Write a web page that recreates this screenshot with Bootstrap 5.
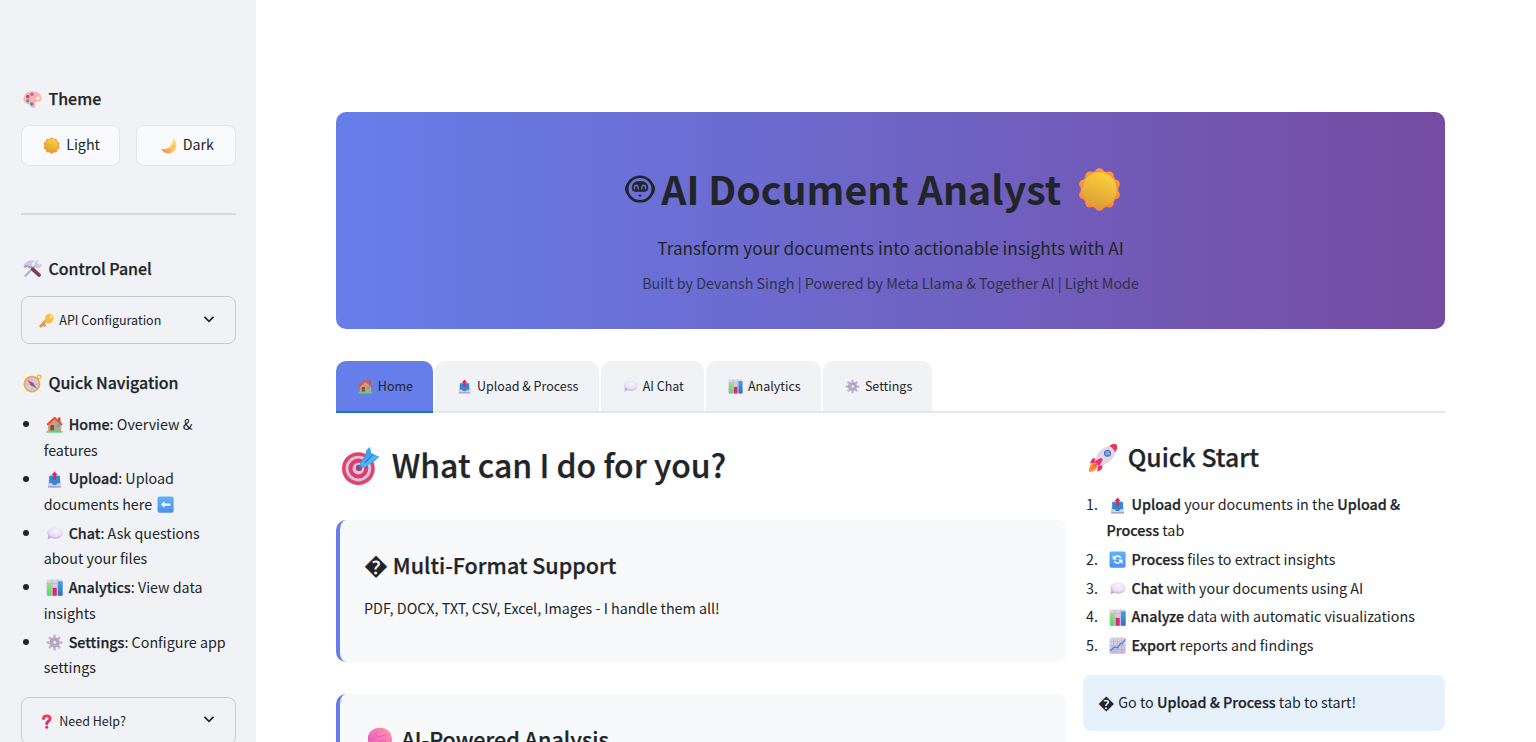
<!DOCTYPE html>
<html lang="en">
<head>
<meta charset="utf-8">
<meta name="viewport" content="width=device-width, initial-scale=1">
<title>AI Document Analyst</title>
<link href="https://cdn.jsdelivr.net/npm/bootstrap@5.3.0/dist/css/bootstrap.min.css" rel="stylesheet">
<style>
html,body{height:742px;overflow:hidden}
body{font-family:"Noto Sans CJK SC",sans-serif;font-size:14.31px;line-height:25.6px;color:#212529;background:#fff}
h1,h2,h3,h4,p,ul,ol{margin:0}
b,h2,h3,h4{font-weight:500;-webkit-text-stroke:.25px currentColor}
.ico{width:1.2em;height:1.2em;margin-left:.15em;margin-right:.17em;vertical-align:-.24em}
.app-sidebar{width:256px;height:742px;background:#f0f2f6;padding:85px 20.5px 0 21px;overflow:hidden}
.app-sidebar h3{font-size:15.95px;line-height:26px}
.app-sidebar h3 .ico{margin-left:.13em}
.theme-btn{height:40.5px;border:1px solid #e3e5ea;border-radius:8px;background:#f9fafc;padding:0;font-size:14.31px;line-height:36px;color:#212529}
.theme-btn:hover{background:#f9fafc}
.theme-btn span{display:block;margin-top:-2px}
.side-rule{height:2px;background:#d8dae0;margin:47.5px 0 39.5px}
.expander{height:48px;border:1px solid #c9cbd1;border-radius:8px;font-size:12.5px;padding:0 20px 0 15.5px}
.chev{width:12px;height:12px;margin-top:-3px}
.nav-notes{list-style:none;padding:0 0 0 22.7px}
.nav-notes li{position:relative;margin-bottom:3.2px}
.nav-notes li::before{content:"";position:absolute;left:-21.2px;top:10.2px;width:6px;height:6px;border-radius:50%;background:#212529}
.app-main{padding:112px 91px 0 80px;height:742px;overflow:hidden}
.hero{height:216.5px;border-radius:10px;background:linear-gradient(90deg,#667eea 0%,#764ba2 100%);color:#212529;padding-top:48px}
.hero h1{font-size:39.25px;line-height:56px;font-weight:700;padding-right:35px}
.robot{width:32px;height:32px;margin-right:5.5px}
.sun-lg{width:45px;height:45px;margin-left:16px;margin-top:2px}
.lead-line{font-size:17.19px;line-height:28px;margin-top:18px}
.by-line{font-size:14.31px;line-height:25.6px;margin-top:8px;opacity:.8}
.tabs{height:52px;margin-top:32px;border-bottom:2px solid #e6e7eb;gap:2px}
.tabs .tab{height:50px;border-radius:10px 10px 0 0;background:#f0f2f6;font-size:12.5px;line-height:49px;padding:0 20.2px;color:#212529;text-decoration:none;white-space:nowrap}
.tabs .on{background:#667eea;height:52px;border-bottom:2px solid #1f77b4;padding:0 20px}
.col-side{width:362px;flex:none}
.col-side h3{font-size:24.75px;line-height:34px;padding-left:1.5px}
.section-title{font-size:31.95px;line-height:44px;margin-top:29px}
.feature{height:141.5px;border-left:4px solid #667eea;border-radius:10px;background:#f8f9fb;padding:29.5px 24px 0;margin-bottom:32.5px}
.feature h3{font-size:21.5px;line-height:29px}
.feature p{margin-top:16.5px}
.rep{font-size:1.1176em;line-height:1}
.tip .rep{font-size:16.5px;margin-left:-1px;vertical-align:-1px}
.steps{padding-left:23.5px;list-style:none;margin-top:18.4px}
.steps li{margin-bottom:3.2px;position:relative}
.steps .num{position:absolute;left:-20.5px}
.tip{height:55.5px;border-radius:8px;background:#e7f1fc;margin-top:17.5px;padding:14.2px 16px}
</style>
</head>
<body>
<svg width="0" height="0" class="position-absolute" aria-hidden="true">
<defs>
<linearGradient id="gSun" x1=".7" y1="0" x2=".3" y2="1"><stop offset="0" stop-color="#ffd23c"/><stop offset="1" stop-color="#d99f33"/></linearGradient>
<linearGradient id="gRay" x1="0" y1="0" x2="0" y2="1"><stop offset="0" stop-color="#ff9a3a"/><stop offset="1" stop-color="#f5853f"/></linearGradient>
<linearGradient id="gMoon" x1=".8" y1="0" x2=".2" y2="1"><stop offset="0" stop-color="#ffe082"/><stop offset=".6" stop-color="#ffc65a"/><stop offset="1" stop-color="#f08a55"/></linearGradient>
<linearGradient id="gBlue" x1="0" y1="0" x2="0" y2="1"><stop offset="0" stop-color="#5db4fb"/><stop offset="1" stop-color="#4d8ff0"/></linearGradient>
<linearGradient id="gKey" gradientUnits="userSpaceOnUse" x1="18" y1="12" x2="4" y2="28"><stop offset="0" stop-color="#f8b23d"/><stop offset="1" stop-color="#ee8a3c"/></linearGradient>
<linearGradient id="gRed" x1="0" y1="0" x2="0" y2="1"><stop offset="0" stop-color="#ff3a4c"/><stop offset="1" stop-color="#d02a78"/></linearGradient>
<linearGradient id="gGreen" x1="0" y1="0" x2="0" y2="1"><stop offset="0" stop-color="#9fe06a"/><stop offset="1" stop-color="#4fd97c"/></linearGradient>
<linearGradient id="gBar" x1="0" y1="0" x2="0" y2="1"><stop offset="0" stop-color="#3fa2ee"/><stop offset="1" stop-color="#2f6fc0"/></linearGradient>
<linearGradient id="gPaper" x1="0" y1="0" x2="0" y2="1"><stop offset="0" stop-color="#dcd6e4"/><stop offset="1" stop-color="#cdb6e2"/></linearGradient>
<radialGradient id="gBubble" cx=".55" cy=".35" r=".65"><stop offset="0" stop-color="#faf5ff"/><stop offset=".7" stop-color="#e9dcf5"/><stop offset="1" stop-color="#cdb2e0"/></radialGradient>
<linearGradient id="gBrain" x1="1" y1="0" x2="0" y2="1"><stop offset="0" stop-color="#ff9a8c"/><stop offset=".5" stop-color="#f775c0"/><stop offset="1" stop-color="#d94bb0"/></linearGradient>
</defs>
<symbol id="palette" viewBox="0 0 32 32"><path d="M16 2C7 2 1 8 1 15c0 6 5 9 9 9 3 0 2 2 3 4 1 2 5 3 7 0 2-3-1-6 2-8 3-1 9 0 9-6C31 7 25 2 16 2Zm9 9a3 2.600 0 1 1 0 5.200 3 2.600 0 0 1 0-5.200Z" fill="#fcb5a9" fill-rule="evenodd"/><circle cx="15" cy="7" r="2.900" fill="#c158d4"/><circle cx="8" cy="11" r="2.900" fill="#df3374"/><circle cx="8" cy="18" r="2.800" fill="#3caaa8"/><circle cx="14.500" cy="23.500" r="3" fill="#5a7fdc"/></symbol>
<symbol id="sun" viewBox="0 0 32 32"><g fill="url(#gRay)"><circle cx="16" cy="16" r="13.400"/><circle cx="16" cy="4.200" r="3.300"/><circle cx="22.900" cy="6.500" r="3.300"/><circle cx="27.200" cy="12.300" r="3.300"/><circle cx="27.200" cy="19.700" r="3.300"/><circle cx="22.900" cy="25.500" r="3.300"/><circle cx="16" cy="27.800" r="3.300"/><circle cx="9.100" cy="25.500" r="3.300"/><circle cx="4.800" cy="19.700" r="3.300"/><circle cx="4.800" cy="12.300" r="3.300"/><circle cx="9.100" cy="6.500" r="3.300"/></g><circle cx="16" cy="16" r="12.200" fill="url(#gSun)"/></symbol>
<symbol id="moon" viewBox="0 0 32 32"><path d="M24 1c9 8 8 20 1 26-8 6-19 4-23-5 8 2 15-1 19-7 3-5 4-10 3-14Z" fill="url(#gMoon)"/><circle cx="25" cy="17" r="1.800" fill="#f7b04b"/><circle cx="18" cy="24" r="1.800" fill="#f2a04f"/></symbol>
<symbol id="tools" viewBox="0 0 32 32"><path d="M4 28 22 10" stroke="#bcb2d0" stroke-width="4" stroke-linecap="round"/><path d="M20 12c-2-5 1-10 6-10l-2 5 3 3 4-2c1 6-5 9-9 7Z" fill="#cfc8dd"/><path d="m10 10 5 5" stroke="#a596b9" stroke-width="4"/><path d="m16 17 11 10" stroke="#803c5c" stroke-width="6" stroke-linecap="round"/><path d="M1 13 3 7l8-5 9 1-5 4 1 4-5 5-4-3-3 2Z" fill="#d0c8df"/><path d="m1 13 3 2 3-2 4 3 3-3-5-2-5-1Z" fill="#a99bbf"/></symbol>
<symbol id="key" viewBox="0 0 32 32"><path d="M17 14 4 28M9 23l3 3" stroke="url(#gKey)" stroke-width="6" stroke-linecap="round"/><path d="M17 3c5-4 14 0 14 7 0 8-9 13-15 9-5-4-4-12 1-16Zm8 2.500a2.200 2.200 0 1 0 .1 0Z" fill="#ffc038" fill-rule="evenodd"/><path d="M15 18c5 2 11 1 15-4-2 7-10 10-15 4Z" fill="#f2a33b"/></symbol>
<symbol id="compass" viewBox="0 0 32 32"><circle cx="27" cy="5" r="3" fill="none" stroke="#f5b13b" stroke-width="2.200"/><circle cx="15" cy="17" r="14" fill="#edaa43"/><circle cx="15" cy="17" r="11" fill="#d6cbdc"/><path d="M13 19 7 9l10 6Z" fill="#ef3a61"/><path d="m13 19 4-4 7 10Z" fill="#756a8f"/><circle cx="15" cy="17" r="2.800" fill="#8e5b80"/><path d="M15 8v3m0 12v3m-9-9h3m12 0h3" stroke="#aa9cb6" stroke-width="1.300"/></symbol>
<symbol id="house" viewBox="0 0 32 32"><path d="M22 3h5v9h-5Z" fill="#b65943"/><path d="M4 14 16 4l12 11v14H4Z" fill="#d69a72"/><path d="M1 15 15 2h2l14 13-2 3L16 6 3 18Z" fill="#e3523f"/><path d="M8 17h7v12H8Z" fill="#85504b"/><path d="M19 15h7v7h-7Z" fill="#48b8ed"/><path d="M1 28q15-3 30 0v3H1Z" fill="#62cf84"/></symbol>
<symbol id="upload" viewBox="0 0 32 32"><path d="M7 10h18l3 14v6H4v-6Z" fill="#c9b7dd"/><path d="M6 9h20v14l-4 3H10l-4-3Z" fill="#3388d6"/><path d="M4 23h7l2 3h6l2-3h7v7H4Z" fill="#d9cfe6"/><path d="M4 28h24v3H4Z" fill="#b4a0ca"/><path d="m16 1 6 7h-3.500v9h-5V8H10Z" fill="#d92a5f"/></symbol>
<symbol id="back" viewBox="0 0 32 32"><rect x="1" y="1" width="30" height="30" rx="3.500" fill="url(#gBlue)"/><path d="m7 16 7-6v4h11v4H14v4Z" fill="#f7f9ff"/></symbol>
<symbol id="bubble" viewBox="0 0 32 32"><path d="M4 18 3 27l9-4Z" fill="#c6acd8"/><ellipse cx="17" cy="14.500" rx="14.500" ry="10.500" fill="url(#gBubble)"/><path d="M3 18c5 7 19 9 27 0-3 9-20 11-27 0Z" fill="#c7afdc" opacity=".6"/></symbol>
<symbol id="bars" viewBox="0 0 32 32"><rect x="1" y="1" width="30" height="30" rx="2" fill="url(#gPaper)"/><path d="M11.500 1v30M21 1v30M1 8h30M1 16h30M1 24h30" stroke="#b9afc6" stroke-width="1"/><rect x="2" y="8" width="8" height="23" rx="1" fill="url(#gGreen)"/><rect x="12.500" y="17" width="7.500" height="14" rx="1" fill="#e02a6b"/><rect x="22.500" y="4" width="8.500" height="27" rx="1" fill="url(#gBar)"/></symbol>
<symbol id="gear" viewBox="0 0 32 32"><path d="M16 3.500v25M3.500 16h25M7.200 7.200l17.600 17.600m0-17.600L7.200 24.800" stroke="#c3b6d2" stroke-width="5" stroke-linecap="round"/><circle cx="16" cy="16" r="7.800" fill="#bbadc9" stroke="#b3a2c3" stroke-width="3"/><circle cx="16.500" cy="15.500" r="4" fill="#ece7f2" stroke="#9e8cae" stroke-width="1.300"/></symbol>
<symbol id="question" viewBox="0 0 32 32"><path d="M9.500 10c0-8 14-8 14 0 0 6-7 5-7 11" fill="none" stroke="url(#gRed)" stroke-width="6" stroke-linecap="round"/><circle cx="16.500" cy="28.300" r="3.200" fill="#dc3070"/></symbol>
<symbol id="target" viewBox="0 0 32 32"><circle cx="14.500" cy="18" r="13.700" fill="#e0446b"/><circle cx="14.500" cy="18" r="10.700" fill="#d9c4dc"/><circle cx="14.500" cy="18" r="8.300" fill="#e23b69"/><circle cx="14.500" cy="18" r="4.900" fill="#dfc5da"/><circle cx="15" cy="17.500" r="2.600" fill="#8e4b79"/><path d="m15 17 9-8" stroke="#685f80" stroke-width="1.500"/><path d="m16 13 4-5 1-5 3-3 1.500 5.500L32 8l-4 4-6 3-4 2-2-1Z" fill="#3d9ff0"/><path d="m16 14 9-8 6 2-8 7-5 3Z" fill="#48b5f6"/><path d="m20 13 7-7" stroke="#2674c9"/></symbol>
<symbol id="rocket" viewBox="0 0 32 32"><path d="M7 21c-5 1-6 6-6 10 4 0 8-1 9-6Z" fill="#ff902f"/><path d="M9 17C4 15 4 18 2 22l7-1Zm6 6c2 5-1 6-5 8l1-8Z" fill="#e92f6b"/><path d="M7 20C9 11 15 4 24 3l6 6c-2 9-9 14-18 16Z" fill="#e2d7ea"/><path d="M23 3c3-3 7-2 8-1s1 5-2 8c-1-3-3-5-6-7Z" fill="#ed3a52"/><path d="M7 20l7-4 2 2-4 7Z" fill="#e7316d"/><path d="M9 21 3 28l9-5Z" fill="#f8506c"/><circle cx="21" cy="11" r="3.800" fill="#5d73b5"/><circle cx="21" cy="11" r="2.400" fill="#61b7f1"/></symbol>
<symbol id="refresh" viewBox="0 0 32 32"><rect x="1" y="1" width="30" height="30" rx="3.500" fill="url(#gBlue)"/><path d="M10 13c3-5 9-5 12 0M22 19c-3 5-9 5-12 0" fill="none" stroke="#fff" stroke-width="3"/><path d="M7 8v8h8Zm18 16v-8h-8Z" fill="#fff"/></symbol>
<symbol id="trend" viewBox="0 0 32 32"><rect x="1" y="1" width="30" height="30" rx="2" fill="url(#gPaper)"/><path d="M8.500 1v30M16 1v30M23.500 1v30M1 8.500h30M1 16h30M1 23.500h30" stroke="#bca9cb"/><path d="m3 25 7-6 6 1 5-8 3 1 6-8" fill="none" stroke="#338fda" stroke-width="2.500" stroke-linecap="round"/></symbol>
<symbol id="brain" viewBox="0 0 32 32"><path d="M1 15C1 6 8 1 16 1c9 0 15 6 15 15 0 8-6 14-12 14-3 0-4-3-7-5-5-2-11-3-11-10Z" fill="url(#gBrain)"/><path d="M4 15c3-3 6-2 8 1m0-10c-3 3-1 6 3 6s5-3 9-2m-8 8c5-3 8-1 9 3" fill="none" stroke="#e05fae" stroke-width="1.200" stroke-linecap="round"/></symbol>
<symbol id="robot" viewBox="0 0 32 32"><path d="M4 11c-4 2-4 10 0 12Zm24 0c4 2 4 10 0 12Z" fill="#212529"/><ellipse cx="16" cy="17" rx="12.800" ry="12.300" fill="none" stroke="#212529" stroke-width="2.600"/><path d="M7.800 15.500C8 10.500 12 9 16 9s8 1.500 8.200 6.500c0 3.500-2 4.300-4 4.300h-8.400c-2 0-4-.8-4-4.300Z" fill="#212529"/><path d="M10.300 17c0-5 4-5 4 0m3.400 0c0-5 4-5 4 0" fill="none" stroke="#6a6bd0" stroke-width="1.400" stroke-linecap="round"/><path d="M14.500 23h3l-1.500 1.500Z" fill="#212529" stroke="#212529" stroke-width=".5"/></symbol>
<symbol id="chevron" viewBox="0 0 12 12"><path d="M1.500 3.800 6 8.300l4.500-4.500" fill="none" stroke="#20232c" stroke-width="1.800"/></symbol>
</svg>

<div class="d-flex">
<aside class="app-sidebar flex-shrink-0">
  <h3><svg class="ico"><use href="#palette"/></svg> Theme</h3>
  <div class="d-flex gap-3" style="margin-top:14px">
    <button class="btn theme-btn flex-fill w-50"><span><svg class="ico"><use href="#sun"/></svg> Light</span></button>
    <button class="btn theme-btn flex-fill w-50"><span><svg class="ico"><use href="#moon"/></svg> Dark</span></button>
  </div>
  <div class="side-rule"></div>
  <h3><svg class="ico"><use href="#tools"/></svg> Control Panel</h3>
  <div class="expander d-flex align-items-center justify-content-between" style="margin-top:15.500px"><span><svg class="ico"><use href="#key"/></svg> API Configuration</span><svg class="chev"><use href="#chevron"/></svg></div>
  <h3 style="margin-top:25px"><svg class="ico"><use href="#compass"/></svg> Quick Navigation</h3>
  <ul class="nav-notes" style="margin-top:16px">
    <li><svg class="ico"><use href="#house"/></svg> <b>Home</b>: Overview &amp; features</li>
    <li><svg class="ico"><use href="#upload"/></svg> <b>Upload</b>: Upload documents here <svg class="ico"><use href="#back"/></svg></li>
    <li><svg class="ico"><use href="#bubble"/></svg> <b>Chat</b>: Ask questions about your files</li>
    <li><svg class="ico"><use href="#bars"/></svg> <b>Analytics</b>: View data insights</li>
    <li><svg class="ico"><use href="#gear"/></svg> <b>Settings</b>: Configure app settings</li>
  </ul>
  <div class="expander d-flex align-items-center justify-content-between" style="margin-top:17px"><span><svg class="ico"><use href="#question"/></svg> Need Help?</span><svg class="chev"><use href="#chevron"/></svg></div>
</aside>

<main class="app-main flex-grow-1">
  <header class="hero text-center">
    <h1 class="d-flex align-items-center justify-content-center"><svg class="robot"><use href="#robot"/></svg><span>AI Document Analyst</span><svg class="sun-lg"><use href="#sun"/></svg></h1>
    <p class="lead-line">Transform your documents into actionable insights with AI</p>
    <p class="by-line">Built by Devansh Singh | Powered by Meta Llama &amp; Together AI | Light Mode</p>
  </header>

  <nav class="tabs d-flex">
    <a class="tab on"><svg class="ico"><use href="#house"/></svg> Home</a>
    <a class="tab"><svg class="ico"><use href="#upload"/></svg> Upload &amp; Process</a>
    <a class="tab"><svg class="ico"><use href="#bubble"/></svg> AI Chat</a>
    <a class="tab"><svg class="ico"><use href="#bars"/></svg> Analytics</a>
    <a class="tab"><svg class="ico"><use href="#gear"/></svg> Settings</a>
  </nav>

  <div class="d-flex gap-3">
    <section class="flex-grow-1">
      <h2 class="section-title"><svg class="ico"><use href="#target"/></svg> What can I do for you?</h2>
      <div class="feature" style="margin-top:34.500px">
        <h3><span class="rep">&#xFFFD;</span> Multi-Format Support</h3>
        <p>PDF, DOCX, TXT, CSV, Excel, Images - I handle them all!</p>
      </div>
      <div class="feature">
        <h3><svg class="ico"><use href="#brain"/></svg> AI-Powered Analysis</h3>
      </div>
    </section>
    <section class="col-side">
      <h3 style="margin-top:26.500px"><svg class="ico"><use href="#rocket"/></svg> Quick Start</h3>
      <ol class="steps">
        <li><span class="num">1.</span><svg class="ico"><use href="#upload"/></svg> <b>Upload</b> your documents in the <b>Upload &amp; Process</b> tab</li>
        <li><span class="num">2.</span><svg class="ico"><use href="#refresh"/></svg> <b>Process</b> files to extract insights</li>
        <li><span class="num">3.</span><svg class="ico"><use href="#bubble"/></svg> <b>Chat</b> with your documents using AI</li>
        <li><span class="num">4.</span><svg class="ico"><use href="#bars"/></svg> <b>Analyze</b> data with automatic visualizations</li>
        <li><span class="num">5.</span><svg class="ico"><use href="#trend"/></svg> <b>Export</b> reports and findings</li>
      </ol>
      <div class="tip"><span class="rep">&#xFFFD;</span> Go to <b>Upload &amp; Process</b> tab to start!</div>
    </section>
  </div>
</main>
</div>
<script src="https://cdn.jsdelivr.net/npm/bootstrap@5.3.0/dist/js/bootstrap.bundle.min.js"></script>
</body>
</html>
